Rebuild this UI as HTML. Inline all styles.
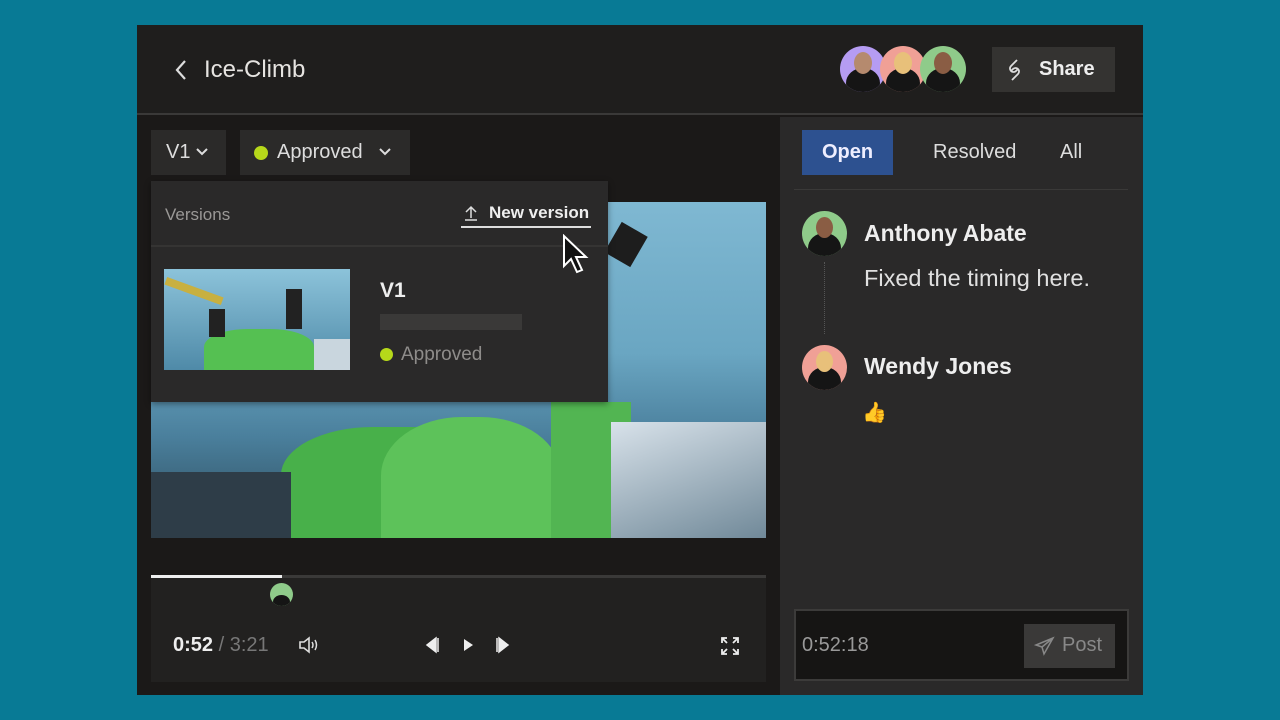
<!DOCTYPE html>
<html><head><style>
*{margin:0;padding:0;box-sizing:border-box}
body{width:1280px;height:720px;background:#087a95;font-family:"Liberation Sans",sans-serif;position:relative;overflow:hidden;color:#e8e6e3}
.a{position:absolute}
</style></head><body>
<div class="a" style="left:137px;top:25px;width:1006px;height:670px;background:#1b1918"></div>
<div class="a" style="left:137px;top:25px;width:1006px;height:90px;background:#1f1e1d;border-bottom:2px solid #3a3938"></div>
<svg class="a" style="left:172px;top:58px" width="18" height="24"><path d="M13 3 L5 12 L13 21" stroke="#ddd" stroke-width="2.2" fill="none"/></svg>
<div class="a" style="left:204px;top:56px;font-size:24px;color:#e6e4e1">Ice-Climb</div>
<div class="a" style="left:840px;top:46px;width:46px;height:46px;border-radius:50%;background:#b59cf2;overflow:hidden"><div style="margin:22px 0 0 6px;width:34px;height:30px;border-radius:50%;background:#151515"></div><div class="a" style="left:14px;top:6px;width:18px;height:22px;border-radius:50%;background:#b58a6e"></div></div>
<div class="a" style="left:880px;top:46px;width:46px;height:46px;border-radius:50%;background:#f0a096;overflow:hidden"><div style="margin:22px 0 0 6px;width:34px;height:30px;border-radius:50%;background:#151515"></div><div class="a" style="left:14px;top:6px;width:18px;height:22px;border-radius:50%;background:#e8c07a"></div></div>
<div class="a" style="left:920px;top:46px;width:46px;height:46px;border-radius:50%;background:#8fcb8a;overflow:hidden"><div style="margin:22px 0 0 6px;width:34px;height:30px;border-radius:50%;background:#151515"></div><div class="a" style="left:14px;top:6px;width:18px;height:22px;border-radius:50%;background:#8a5d44"></div></div>
<div class="a" style="left:992px;top:47px;width:123px;height:45px;background:#343331"></div>
<svg class="a" style="left:1003px;top:57px" width="22" height="26"><path d="M14 3 L8 9 a3.5 3.5 0 0 0 5 5 L15 12 M9 23 L15 17 a3.5 3.5 0 0 0 -5 -5 L8 14" stroke="#ddd" stroke-width="1.8" fill="none"/></svg>
<div class="a" style="left:1039px;top:58px;font-size:20px;font-weight:bold;color:#eee">Share</div>
<!-- right panel -->
<div class="a" style="left:780px;top:117px;width:363px;height:578px;background:#2a2929"></div>
<div class="a" style="left:802px;top:130px;width:91px;height:45px;background:#2d5190"></div>
<div class="a" style="left:822px;top:141px;font-size:20px;font-weight:bold;color:#eef">Open</div>
<div class="a" style="left:933px;top:141px;font-size:20px;color:#ddd">Resolved</div>
<div class="a" style="left:1060px;top:141px;font-size:20px;color:#ddd">All</div>
<div class="a" style="left:794px;top:189px;width:334px;height:1px;background:#3a3938"></div>
<div class="a" style="left:802px;top:211px;width:45px;height:45px;border-radius:50%;background:#8fcb8a;overflow:hidden"><div style="margin:22px 0 0 6px;width:33px;height:30px;border-radius:50%;background:#151515"></div><div class="a" style="left:14px;top:6px;width:17px;height:21px;border-radius:50%;background:#8a5d44"></div></div>
<div class="a" style="left:824px;top:262px;height:72px;border-left:1px dotted #555"></div>
<div class="a" style="left:864px;top:220px;font-size:23px;font-weight:bold;color:#eee">Anthony Abate</div>
<div class="a" style="left:864px;top:265px;font-size:23.5px;color:#e0e0e0">Fixed the timing here.</div>
<div class="a" style="left:802px;top:345px;width:45px;height:45px;border-radius:50%;background:#f0a096;overflow:hidden"><div style="margin:22px 0 0 6px;width:33px;height:30px;border-radius:50%;background:#151515"></div><div class="a" style="left:14px;top:6px;width:17px;height:21px;border-radius:50%;background:#e8c07a"></div></div>
<div class="a" style="left:864px;top:353px;font-size:23px;font-weight:bold;color:#eee">Wendy Jones</div>
<div class="a" style="left:862px;top:400px;font-size:20px;color:#f3b733">👍</div>
<div class="a" style="left:794px;top:609px;width:335px;height:72px;background:#161514;border:2px solid #3c3b3a"></div>
<div class="a" style="left:802px;top:634px;font-size:20px;color:#999">0:52:18</div>
<div class="a" style="left:1024px;top:624px;width:91px;height:44px;background:#3a3938"></div>
<svg class="a" style="left:1034px;top:636px" width="22" height="20"><path d="M19 2 L2 9 L8 11 L10 18 Z M19 2 L8 11" stroke="#888" stroke-width="1.5" fill="none"/></svg>
<div class="a" style="left:1062px;top:634px;font-size:20px;color:#888">Post</div>
<!-- left -->
<div class="a" style="left:151px;top:130px;width:75px;height:45px;background:#2b2a29"></div>
<div class="a" style="left:166px;top:141px;font-size:20px;color:#ddd">V1</div>
<svg class="a" style="left:195px;top:147px" width="14" height="10"><path d="M2 2 L7 7 L12 2" stroke="#ddd" stroke-width="2" fill="none"/></svg>
<div class="a" style="left:240px;top:130px;width:170px;height:45px;background:#2b2a29"></div>
<div class="a" style="left:254px;top:146px;width:14px;height:14px;border-radius:50%;background:#b6d81a"></div>
<div class="a" style="left:277px;top:141px;font-size:20px;color:#ddd">Approved</div>
<svg class="a" style="left:378px;top:147px" width="14" height="10"><path d="M2 2 L7 7 L12 2" stroke="#ddd" stroke-width="2" fill="none"/></svg>
<!-- video -->
<div class="a" style="left:151px;top:202px;width:615px;height:336px;background:linear-gradient(180deg,#7fb8d2 0%,#6aa6c2 45%,#4a7f9c 70%,#2c4a5a 100%);overflow:hidden">
<div class="a" style="left:460px;top:25px;width:30px;height:35px;background:#1d1d1d;transform:rotate(30deg)"></div>
<div class="a" style="left:130px;top:225px;width:230px;height:120px;border-radius:40% 40% 0 0;background:#48b04a"></div>
<div class="a" style="left:230px;top:215px;width:180px;height:130px;border-radius:45% 45% 0 0;background:#5dc25a"></div>
<div class="a" style="left:400px;top:200px;width:80px;height:140px;background:#52b552"></div>
<div class="a" style="left:460px;top:220px;width:160px;height:120px;background:linear-gradient(160deg,#d8e2ea,#6d8696)"></div>
<div class="a" style="left:0;top:270px;width:140px;height:70px;background:#2e3d48"></div>
</div>
<!-- dropdown -->
<div class="a" style="left:151px;top:181px;width:457px;height:221px;background:#2a2929;box-shadow:0 2px 6px rgba(0,0,0,.4)"></div>
<div class="a" style="left:165px;top:205px;font-size:17px;color:#9a9896">Versions</div>
<svg class="a" style="left:463px;top:204px" width="16" height="18"><path d="M8 14 V4 M3 8 L8 3 L13 8 M2 16 H14" stroke="#ddd" stroke-width="1.5" fill="none"/></svg>
<div class="a" style="left:489px;top:203px;font-size:17px;font-weight:bold;color:#eee">New version</div>
<div class="a" style="left:461px;top:226px;width:130px;height:2px;background:#ddd"></div>
<div class="a" style="left:151px;top:245px;width:457px;height:2px;background:#353433"></div>
<div class="a" style="left:164px;top:269px;width:186px;height:101px;background:linear-gradient(180deg,#8cc3da,#4f8aa8);overflow:hidden"><div class="a" style="left:0;top:18px;width:60px;height:8px;background:#c8b040;transform:rotate(20deg)"></div><div class="a" style="left:40px;top:60px;width:110px;height:45px;border-radius:40% 40% 0 0;background:#55c052"></div><div class="a" style="left:45px;top:40px;width:16px;height:28px;background:#222"></div><div class="a" style="left:122px;top:20px;width:16px;height:40px;background:#222"></div><div class="a" style="left:150px;top:70px;width:40px;height:35px;background:#c9d6de"></div></div>
<div class="a" style="left:380px;top:279px;font-size:21px;font-weight:bold;color:#eee">V1</div>
<div class="a" style="left:380px;top:314px;width:142px;height:16px;background:#3a3938"></div>
<div class="a" style="left:380px;top:348px;width:13px;height:13px;border-radius:50%;background:#b6d81a"></div>
<div class="a" style="left:401px;top:344px;font-size:19px;color:#8e8c8a">Approved</div>
<svg class="a" style="left:561px;top:234px" width="32" height="44"><path d="M3 2 L3 32 L10 25 L16 38 L21 36 L15 23 L25 23 Z" fill="#111" stroke="#fff" stroke-width="2"/></svg>
<!-- controls -->
<div class="a" style="left:151px;top:578px;width:615px;height:104px;background:#222120"></div>
<div class="a" style="left:151px;top:575px;width:615px;height:3px;background:#3a3938"></div>
<div class="a" style="left:151px;top:575px;width:131px;height:3px;background:#eee"></div>
<div class="a" style="left:270px;top:583px;width:23px;height:23px;border-radius:50%;background:#8fcb8a;overflow:hidden"><div style="margin:12px 0 0 3px;width:17px;height:14px;border-radius:50%;background:#151515"></div></div>
<div class="a" style="left:173px;top:634px;font-size:20px;font-weight:bold;color:#eee">0:52 <span style="font-weight:normal;color:#777">/ 3:21</span></div>
<svg class="a" style="left:297px;top:635px" width="24" height="20"><path d="M3 7 H7 L12 3 V17 L7 13 H3 Z" stroke="#ddd" stroke-width="1.6" fill="none"/><path d="M15 7 Q17 10 15 13 M18 5 Q21 10 18 15" stroke="#ddd" stroke-width="1.5" fill="none"/></svg>
<svg class="a" style="left:424px;top:636px" width="90" height="20"><path d="M12 2 L3 9 L12 16 Z M14 2 V16" fill="#eee" stroke="#eee" stroke-width="1.5"/><path d="M40 3 L49 9 L40 15 Z" fill="#eee"/><path d="M75 2 L84 9 L75 16 Z M73 2 V16" fill="#eee" stroke="#eee" stroke-width="1.5"/></svg>
<svg class="a" style="left:720px;top:636px" width="20" height="20"><path d="M2 7 V2 H7 M13 2 H18 V7 M18 13 V18 H13 M7 18 H2 V13 M3 3 L7 7 M17 3 L13 7 M17 17 L13 13 M3 17 L7 13" stroke="#eee" stroke-width="1.8" fill="none"/></svg>
</body></html>
